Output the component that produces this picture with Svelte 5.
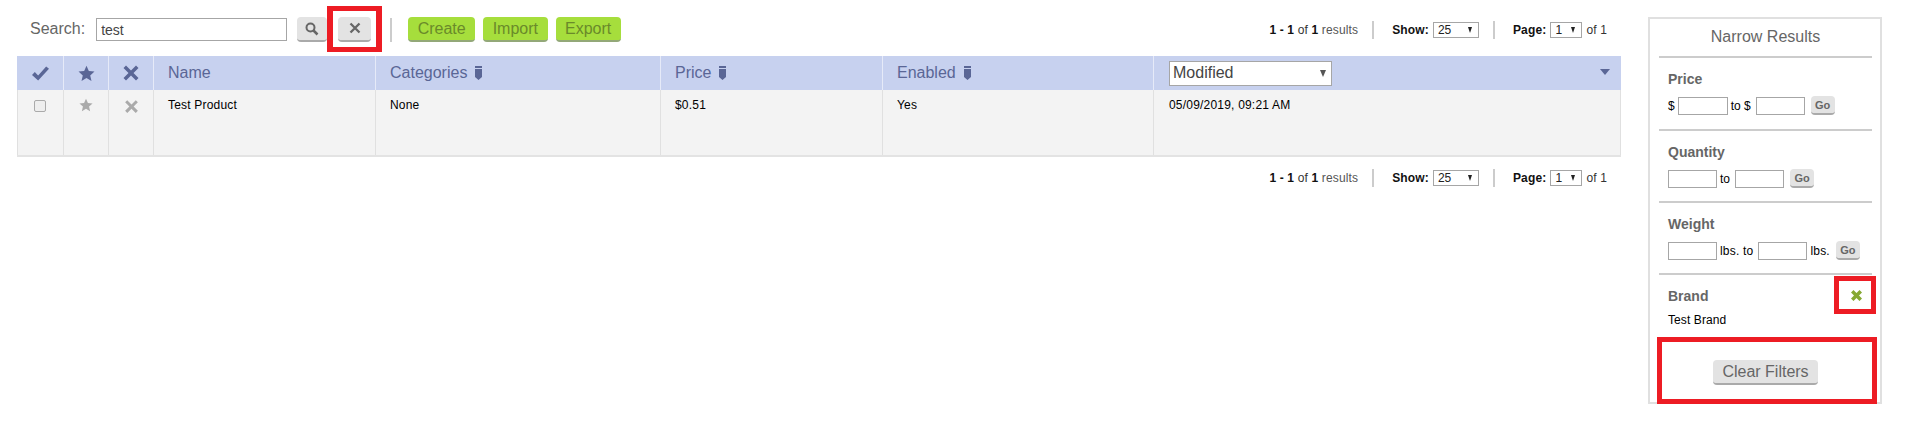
<script>
	const cols = [
		{ label: 'Name', cell: 'Test Product', w: 222 },
		{ label: 'Categories', sort: true, cell: 'None', w: 285 },
		{ label: 'Price', sort: true, cell: '$0.51', w: 222 },
		{ label: 'Enabled', sort: true, cell: 'Yes', w: 271 }
	];
</script>

{#snippet crossIcon(size, color)}
	<svg width={size} height={size} viewBox="0 0 16 16"><path d="M2 4 4 2 8 6 12 2 14 4 10 8 14 12 12 14 8 10 4 14 2 12 6 8z" fill={color} /></svg>
{/snippet}

{#snippet starIcon(size, color)}
	<svg width={size} height={size} viewBox="0 0 16 16"><path d="M8 .8 10.200 5.700 15.500 6.200 11.500 9.800 12.700 15 8 12.300 3.300 15 4.500 9.800 .5 6.200 5.800 5.700z" fill={color} /></svg>
{/snippet}

{#snippet sortIcon()}
	<svg class="sort" width="7" height="14" viewBox="0 0 7 14"><path d="M0 0h7v2H0zM0 3h7v8L3.500 14 0 11z" fill="#5a6696" /></svg>
{/snippet}

{#snippet miniSelect(kind, value)}
	<span class="sel {kind}">
		<select class="mini"><option>{value}</option></select>
		<i class="arrow"></i>
	</span>
{/snippet}

{#snippet pager()}
	<div class="pager">
		<span class="count"><b>1 - 1</b> of <b>1</b> <span class="results">results</span></span>
		<span class="sep"></span>
		<b>Show:</b>
		{@render miniSelect('show', '25')}
		<span class="sep"></span>
		<b>Page:</b>
		{@render miniSelect('page', '1')}
		<span>of 1</span>
	</div>
{/snippet}

<div class="page-wrap">
	<main>
		<div class="toolbar">
			<label class="search-label" for="q">Search:</label>
			<input id="q" class="search" value="test" />
			<button class="btn icon-btn search-btn" aria-label="Search">
				<svg width="14" height="14" viewBox="0 0 14 14"><circle cx="5.500" cy="5.500" r="4" fill="none" stroke="#666" stroke-width="2" /><path d="M8.500 8.500l4 4" stroke="#666" stroke-width="2.500" /></svg>
			</button>
			<span class="clear-wrap">
				<button class="btn icon-btn clear-btn" aria-label="Clear">
					<svg width="14" height="14" viewBox="0 0 14 14"><path d="M2.500 2.500l9 9M11.500 2.500l-9 9" stroke="#666" stroke-width="2.300" /></svg>
				</button>
			</span>
			<span class="tool-sep"></span>
			<button class="btn green">Create</button>
			<button class="btn green">Import</button>
			<button class="btn green">Export</button>
			{@render pager()}
		</div>

		<div class="table">
			<div class="row head">
				<div class="cell tick">
					<svg width="19" height="17" viewBox="0 0 20 18"><path d="M1 10.500 4 7.500 7.500 11 16 1.500 19 4 7.500 16.500z" fill="#5a6696" /></svg>
				</div>
				<div class="cell tick">{@render starIcon(17, '#5a6696')}</div>
				<div class="cell tick">{@render crossIcon(20, '#5a6696')}</div>
				{#each cols as col}
					<div class="cell" style="width:{col.w}px">
						{col.label}
						{#if col.sort}{@render sortIcon()}{/if}
					</div>
				{/each}
				<div class="cell last">
					<span class="sel modified">
						<select><option>Modified</option></select>
						<i class="arrow"></i>
					</span>
					<span class="caret"></span>
				</div>
			</div>
			<div class="row body">
				<div class="cell tick"><span class="check"></span></div>
				<div class="cell tick">{@render starIcon(14, '#aaa')}</div>
				<div class="cell tick">{@render crossIcon(17, '#aaa')}</div>
				{#each cols as col}
					<div class="cell" style="width:{col.w}px">{col.cell}</div>
				{/each}
				<div class="cell last">05/09/2019, 09:21 AM</div>
			</div>
		</div>

		<div class="bottom-bar">{@render pager()}</div>
	</main>

	<aside>
		<h3>Narrow Results</h3>
		<section>
			<h4>Price</h4>
			<div class="range">
				<span>$</span><input class="num wide" /><span>to $</span><input class="num second" /><button class="btn go">Go</button>
			</div>
		</section>
		<section>
			<h4>Quantity</h4>
			<div class="range">
				<input class="num" /><span>to</span><input class="num second" /><button class="btn go">Go</button>
			</div>
		</section>
		<section>
			<h4>Weight</h4>
			<div class="range weight">
				<input class="num" /><span>lbs. to</span><input class="num second" /><span>lbs.</span><button class="btn go">Go</button>
			</div>
		</section>
		<section class="brand">
			<h4>Brand</h4>
			<span class="brand-x">
				<svg width="13" height="13" viewBox="0 0 13 13"><path d="M1 3.500 3.500 1 6.500 4 9.500 1 12 3.500 9 6.500 12 9.500 9.500 12 6.500 9 3.500 12 1 9.500 4 6.500z" fill="#86a832" /></svg>
			</span>
			<div class="brand-name">Test Brand</div>
		</section>
		<div class="clear-all">
			<button class="btn clear-filters">Clear Filters</button>
		</div>
	</aside>
</div>

<style>
	:global(body) {
		margin: 0;
		background: #fff;
		font-family: 'Liberation Sans', Arial, sans-serif;
		font-size: 12px;
		color: #000;
	}

	.page-wrap {
		display: flex;
		align-items: flex-start;
		padding-left: 17px;
		height: 443px;
		box-sizing: border-box;
		overflow: hidden;
	}

	main {
		width: 1604px;
		flex: none;
	}

	.toolbar {
		display: flex;
		align-items: center;
		height: 53px;
		padding: 3px 0 0 13px;
	}

	.search-label {
		font-size: 16px;
		color: #666;
		margin: 0 11px 1px 0;
	}

	.search {
		width: 191px;
		height: 23px;
		box-sizing: border-box;
		border: 1px solid #a6a6a6;
		padding: 0 4px;
		font: 14px 'Liberation Sans', Arial, sans-serif;
		color: #444;
		border-radius: 0;
		outline: 0;
	}

	.btn {
		box-sizing: border-box;
		border: 0;
		border-bottom: 2px solid #aaa;
		border-radius: 4px;
		background: #e3e3e3;
		color: #666;
		font-family: 'Liberation Sans', Arial, sans-serif;
		padding: 0;
	}

	.icon-btn {
		display: flex;
		align-items: center;
		justify-content: center;
		height: 25px;
	}

	.search-btn {
		width: 30px;
		margin-left: 10px;
	}

	.clear-wrap {
		display: flex;
		align-items: center;
		justify-content: center;
		width: 55px;
		height: 46px;
		box-sizing: border-box;
		border: 6px solid #ed1c24;
		border-width: 5px 6px;
		margin-bottom: 1px;
	}

	.clear-btn {
		width: 33px;
		flex: none;
	}

	.tool-sep {
		width: 2px;
		height: 24px;
		background: #ccc;
		margin: 0 16px 0 8px;
	}

	.green {
		background: #a6de3c;
		border-bottom-color: #93a878;
		color: #6a8a2a;
		font-size: 16px;
		height: 25px;
		padding: 0 9.500px;
		margin-right: 8px;
	}

	.pager {
		display: flex;
		align-items: center;
		gap: 4px;
		margin-left: auto;
		padding-right: 14px;
		font-size: 12px;
		letter-spacing: 0.15px;
		color: #333;
		white-space: nowrap;
	}

	.pager b {
		color: #111;
	}

	.results {
		color: #555;
	}

	.sep {
		width: 2px;
		height: 18px;
		background: #ccc;
		margin: 0 14px 0 10px;
	}

	.sel {
		position: relative;
		display: block;
		flex: none;
	}

	.sel select {
		display: block;
		width: 100%;
		height: 100%;
		box-sizing: border-box;
		appearance: none;
		background: #fff;
		border: 1px solid #a6a6a6;
		border-radius: 0;
		outline: 0;
		font-family: 'Liberation Sans', Arial, sans-serif;
	}

	.mini {
		font-size: 12px;
		color: #222;
		padding: 0 0 0 4px;
	}

	.show {
		width: 46px;
		height: 16px;
	}

	.page {
		width: 32px;
		height: 16px;
	}

	.arrow {
		position: absolute;
		right: 7px;
		top: 5px;
		border: 2.500px solid transparent;
		border-top: 6px solid #222;
		border-bottom: 0;
	}

	.table {
		border-bottom: 2px solid #e3e3e3;
	}

	.row {
		display: flex;
	}

	.head {
		height: 34px;
		background: #c7d1ef;
		color: #5a6696;
		font-size: 16px;
	}

	.body {
		height: 65px;
		background: #f3f3f3;
		font-size: 12px;
		letter-spacing: 0.2px;
		color: #000;
		box-shadow: inset 1px 0 #e0e0e0;
	}

	.cell {
		box-sizing: border-box;
		flex: none;
		padding-left: 14px;
		border-right: 1px solid #e0e0e0;
		display: flex;
		align-items: center;
		gap: 8px;
	}

	.head .cell {
		border-right-color: #e6eaf8;
	}

	.body .cell {
		align-items: flex-start;
		padding-top: 7px;
		line-height: 16px;
	}

	.cell.tick {
		width: 45px;
		padding: 0;
		justify-content: center;
	}

	.cell.tick:first-child {
		width: 47px;
	}

	.body .cell.tick {
		padding-top: 8px;
	}

	.cell.last {
		flex: 1;
		border-right: 0;
		padding-left: 15px;
		position: relative;
	}

	.body .cell.last {
		border-right: 1px solid #e0e0e0;
	}

	.modified {
		width: 163px;
		height: 25px;
	}

	.modified select {
		font-size: 16px;
		color: #444;
		padding: 0 0 2px 3px;
	}

	.modified .arrow {
		right: 6px;
		top: 9px;
		border-width: 7px 3px 0;
		border-top-color: #555;
	}

	.caret {
		position: absolute;
		right: 11px;
		top: 13px;
		border: 5px solid transparent;
		border-top: 6px solid #5a6696;
		border-bottom: 0;
	}

	.check {
		width: 10px;
		height: 10px;
		border: 1px solid #aaa;
		border-radius: 2px;
		background: #eee;
		margin-top: 2px;
	}

	.bottom-bar {
		display: flex;
		height: 42px;
		align-items: center;
	}

	aside {
		flex: none;
		width: 234px;
		height: 387px;
		margin: 17px 0 0 27px;
		box-sizing: border-box;
		border: 2px solid #e0e0e0;
		padding: 0 8px 0 9px;
		color: #000;
	}

	h3 {
		margin: 0;
		height: 39px;
		box-sizing: border-box;
		line-height: 36px;
		text-align: center;
		font-size: 16px;
		font-weight: 400;
		color: #666;
		border-bottom: 2px solid #ccc;
	}

	section {
		box-sizing: border-box;
		padding: 14px 9px 0;
		height: 72px;
		border-bottom: 2px solid #ccc;
	}

	section:first-of-type {
		height: 73px;
	}

	h4 {
		margin: 0 0 9px;
		font-size: 14px;
		color: #666;
		line-height: 15px;
	}

	.range {
		display: flex;
		align-items: center;
		gap: 3px;
		font-size: 12px;
		white-space: nowrap;
	}

	.weight {
		letter-spacing: 0.2px;
	}

	.num {
		width: 49px;
		height: 18px;
		box-sizing: border-box;
		border: 1px solid #a6a6a6;
		padding: 0;
		margin: 0;
		border-radius: 0;
		flex: none;
	}

	.num.wide {
		width: 50px;
	}

	.num.second {
		margin-left: 2px;
	}

	.go {
		font-size: 11px;
		font-weight: 700;
		letter-spacing: 0;
		width: 24px;
		height: 19px;
		margin-left: 3px;
		flex: none;
	}

	.brand {
		position: relative;
		border-bottom: 0;
		height: 63px;
	}

	.brand h4 {
		margin-bottom: 8px;
	}

	.brand-x {
		position: absolute;
		right: -4px;
		top: 1px;
		box-sizing: border-box;
		width: 42px;
		height: 38px;
		padding: 0 0 0 2px;
		border: 5px solid #ed1c24;
		display: flex;
		align-items: center;
		justify-content: center;
	}

	.brand-name {
		font-size: 12px;
		line-height: 16px;
		letter-spacing: 0.1px;
	}

	.clear-all {
		box-sizing: border-box;
		width: 220px;
		height: 67px;
		margin: -1px 0 0 -2px;
		padding: 4px 3px 0 0;
		border: 5px solid #ed1c24;
		display: flex;
		align-items: center;
		justify-content: center;
	}

	.clear-filters {
		font-size: 16px;
		width: 105px;
		height: 25px;
	}
</style>
